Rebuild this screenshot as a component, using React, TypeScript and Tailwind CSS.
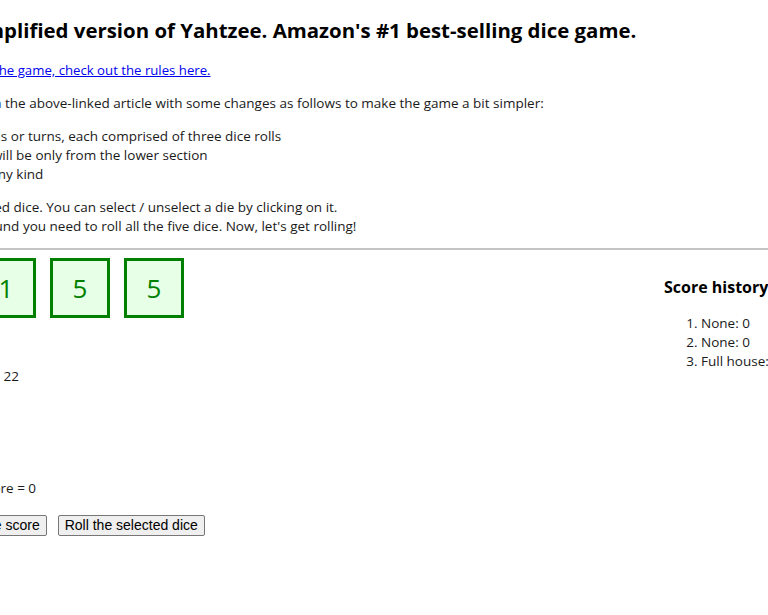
const dice = [3, 6, 1, 5, 5];
const history = ['None: 0', 'None: 0', 'Full house: 25'];

function Die({ value }: { value: number }) {
  return (
    <div className="flex h-[60px] w-[60px] shrink-0 items-center justify-center border-[3px] border-[#008000] bg-[#e6ffe6] text-[26px] text-[#008000]">
      {value}
    </div>
  );
}

export default function App() {
  return (
    <div
      className="h-[615px] w-[768px] overflow-hidden bg-white text-[13.5px] leading-[19px] text-[#1a1a1a]"
      style={{ fontFamily: '"Open Sans", "Noto Sans", sans-serif' }}
    >
      <div className="ml-[-172px] w-[1100px] whitespace-nowrap">
        <h2 className="mt-[16px] indent-[-9px] text-[20.4px] font-bold leading-[28px] text-black">
          This is a much simplified version of Yahtzee. Amazon's #1 best-selling dice game.
        </h2>
        <p className="mt-[17px] indent-[-11px] text-[13.2px]">
          <a href="#" className="text-[#0000ee] underline">
            If you are completely new to the game, check out the rules here.
          </a>
        </p>
        <p className="mt-[14px] indent-[16px]">
          It is based on the rules in the above-linked article with some changes as follows to make the game a bit simpler:
        </p>
        <ul className="mt-[14px] list-disc pl-[40px]">
          <li className="indent-[-8px]">There will be 13 rounds or turns, each comprised of three dice rolls</li>
          <li>The scoring system will be only from the lower section</li>
          <li className="indent-[-6px]">There's no bonus of any kind</li>
        </ul>
        <div className="mt-[14px]">
          <p className="indent-[-19px]">You can re-roll only the selected dice. You can select / unselect a die by clicking on it.</p>
          <p className="indent-[4px]">At the beginning of any round you need to roll all the five dice. Now, let's get rolling!</p>
        </div>
      </div>

      <hr className="mt-[12px] border-0 border-t-2 border-[#c4c4c4]" />

      <div className="ml-[-172px] flex w-[1100px] whitespace-nowrap">
        <div className="w-[836px] shrink-0">
          <div className="mt-[8px] flex gap-[14px]">
            {dice.map((d, i) => (
              <Die key={i} value={d} />
            ))}
          </div>
          <p className="mt-[49px] indent-[11px]">Sum of the current dice is 22</p>
          <p className="mt-[93px] indent-[-2px]">Your current total game score = 0</p>
          <div className="mt-[17px] flex gap-[11px]" style={{ fontFamily: '"Liberation Sans", Arial, sans-serif' }}>
            <button className="rounded-[2px] border border-[#767676] bg-[#efefef] px-[6px] py-[1px] text-[14px] leading-[17px] text-black">
              Keep the dice and take the score
            </button>
            <button className="rounded-[2px] border border-[#767676] bg-[#efefef] px-[6px] py-[1px] text-[14px] leading-[17px] text-black">
              Roll the selected dice
            </button>
          </div>
        </div>
        <div className="pt-[26px]">
          <h3 className="text-[16px] font-bold leading-[22px] text-black">Score history</h3>
          <ol className="mt-[16px] list-decimal pl-[37px]">
            {history.map((h, i) => (
              <li key={i}>{h}</li>
            ))}
          </ol>
        </div>
      </div>
    </div>
  );
}
